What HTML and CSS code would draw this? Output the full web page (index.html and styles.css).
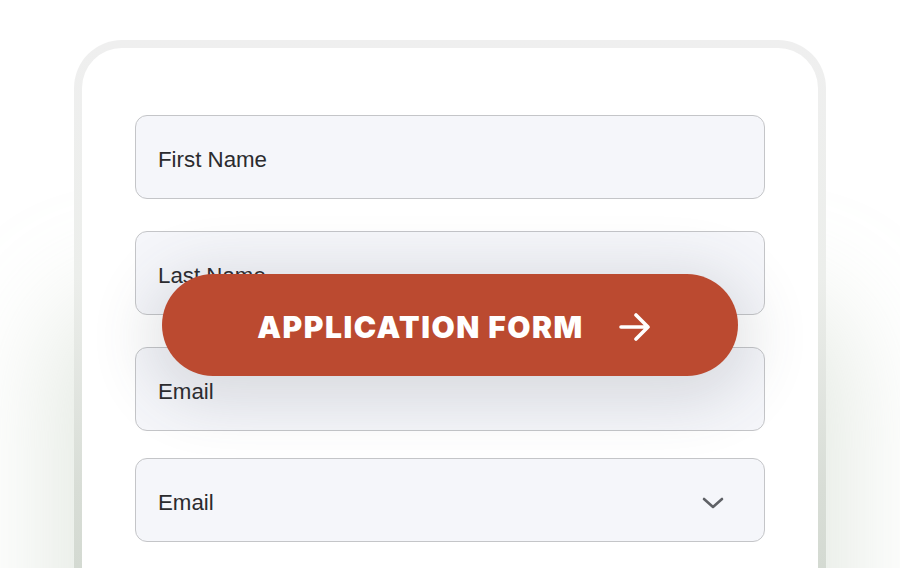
FILE: index.html
```html
<!DOCTYPE html>
<html>
<head>
<meta charset="utf-8">
<link rel="stylesheet" href="styles.css">
</head>
<body>
<div class="stage">
  <div class="frame">
    <div class="panel">
      <div class="fields">
        <div class="field">First Name</div>
        <div class="field">Last Name</div>
        <div class="field">Email</div>
        <div class="field select">Email
          <svg class="chev" width="22" height="14" viewBox="0 0 22 14"><path d="M2 3 L11 11 L20 3" fill="none" stroke="#5f6166" stroke-width="2.6" stroke-linecap="round" stroke-linejoin="round"/></svg>
        </div>
      </div>
      <div class="cta">
        <span class="cta-text">APPLICATION FORM</span>
        <svg class="arrow" width="32" height="28" viewBox="0 0 32 28"><path d="M2 14 H29 M17 2 L29 14 L17 26" fill="none" stroke="#fff" stroke-width="3.6" stroke-linecap="round" stroke-linejoin="round"/></svg>
      </div>
    </div>
  </div>
</div>
</body>
</html>
```
FILE: styles.css
```css
html, body {
  margin: 0;
  padding: 0;
  background: #ffffff;
  overflow: hidden;
  width: 900px;
  height: 568px;
}
.stage {
  display: flex;
  justify-content: center;
  padding-top: 40px;
}
.frame {
  width: 736px;
  height: 520px;
  padding: 8px 8px 0 8px;
  border-radius: 48px 48px 0 0;
  background: linear-gradient(180deg, #efefef 0%, #eceeeb 45%, #d8ddd6 85%, #d4dad2 100%);
  box-shadow: 0 280px 110px 20px rgba(175, 190, 168, 0.36);
}
.panel {
  position: relative;
  height: 100%;
  background: #ffffff;
  border-radius: 40px 40px 0 0;
  padding: 67px 53px 0 53px;
  box-sizing: border-box;
}
.fields {
  display: flex;
  flex-direction: column;
  gap: 32px;
}
.field {
  height: 84px;
  box-sizing: border-box;
  border: 1.5px solid #c4c5c8;
  border-radius: 12px;
  background: #f5f6fa;
  display: flex;
  align-items: center;
  padding-left: 22px;
  padding-right: 40px;
  padding-top: 5px;
  font-family: "Liberation Sans", Arial, sans-serif;
  font-size: 22.3px;
  color: #2b2b2e;
}
.select {
  margin-top: -5px;
  justify-content: space-between;
}
.chev {
  display: block;
}
.cta {
  position: absolute;
  left: 80px;
  top: 226px;
  width: 576px;
  height: 102px;
  border-radius: 51px;
  background: #bb4a30;
  box-shadow: 0 12px 60px 14px rgba(70, 72, 90, 0.16);
  display: flex;
  align-items: center;
  justify-content: center;
  gap: 35px;
  padding-left: 8px;
  padding-top: 4px;
  box-sizing: border-box;
}
.cta-text {
  font-family: "Inter", "DejaVu Sans", sans-serif;
  font-weight: 900;
  font-size: 30px;
  letter-spacing: 1.5px;
  color: #ffffff;
}
.arrow {
  display: block;
}
```
